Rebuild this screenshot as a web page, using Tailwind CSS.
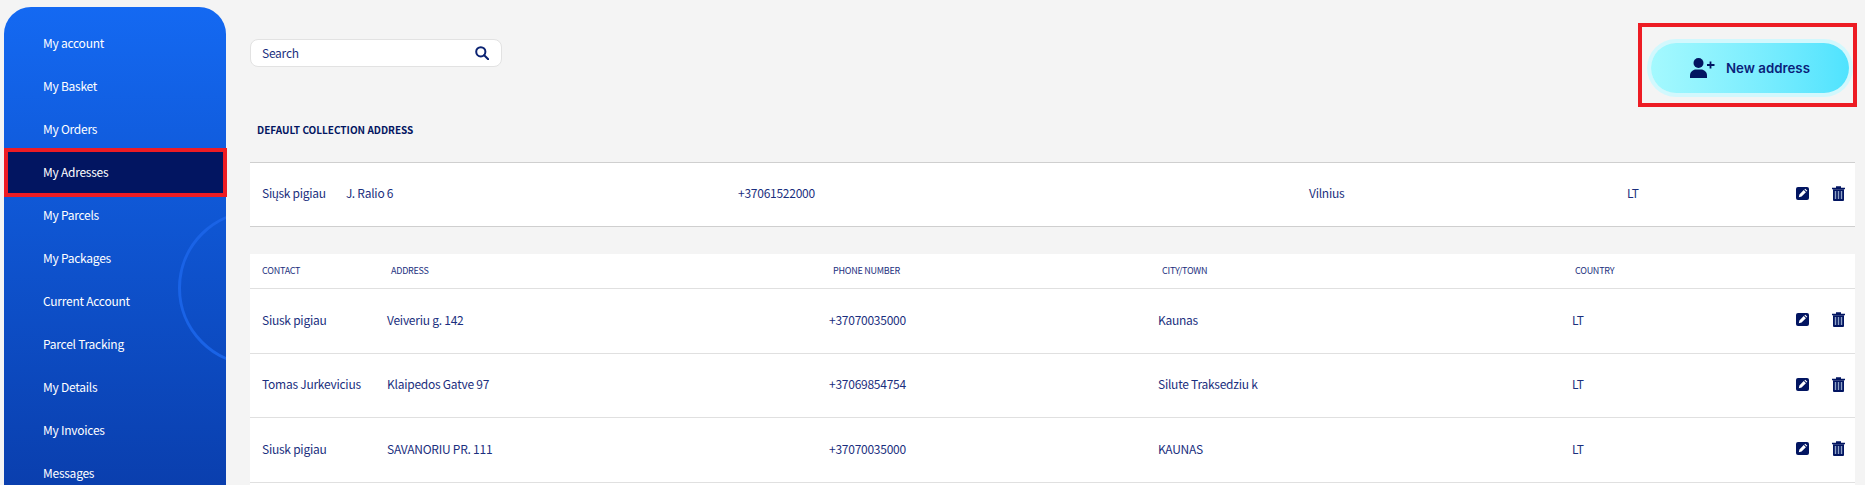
<!DOCTYPE html>
<html lang="en">
<head>
  <meta charset="UTF-8"/>
  <title>My Adresses</title>
  <script src="https://cdn.jsdelivr.net/npm/@tailwindcss/browser@4"></script>
</head>
<body class="bg-[#f4f4f4] h-[485px] overflow-hidden font-['Noto_Sans_CJK_SC',sans-serif] text-[#1b2f7e] text-[12px] tracking-[-0.25px] leading-4">
  <div class="flex h-[485px]">
    <!-- sidebar -->
    <aside class="relative ml-1 mt-[7px] w-[222px] h-[478px] shrink-0 overflow-hidden rounded-t-[27px] bg-gradient-to-b from-[#1469f2] to-[#0a3fae] pt-[14px] text-white">
      <div class="absolute left-[174px] top-[203px] w-[156px] h-[156px] rounded-full border-[3px] border-[#1a63e6]"></div>
      <nav class="relative flex flex-col">
        <a class="h-[43px] pl-[39px] flex items-center">My account</a>
        <a class="h-[43px] pl-[39px] flex items-center">My Basket</a>
        <a class="h-[43px] pl-[39px] flex items-center">My Orders</a>
        <a class="h-[43px] pl-[39px] flex items-center bg-[#021561]">My Adresses</a>
        <a class="h-[43px] pl-[39px] flex items-center">My Parcels</a>
        <a class="h-[43px] pl-[39px] flex items-center">My Packages</a>
        <a class="h-[43px] pl-[39px] flex items-center">Current Account</a>
        <a class="h-[43px] pl-[39px] flex items-center">Parcel Tracking</a>
        <a class="h-[43px] pl-[39px] flex items-center">My Details</a>
        <a class="h-[43px] pl-[39px] flex items-center">My Invoices</a>
        <a class="h-[43px] pl-[39px] flex items-center">Messages</a>
      </nav>
    </aside>
    <div class="absolute left-[4px] top-[148px] w-[223px] h-[49px] border-4 border-[#ed1c24]"></div>

    <!-- main -->
    <main class="ml-6 w-[1605px] shrink-0">
      <div class="flex justify-between items-start h-[97px]">
        <div class="mt-[39px] w-[252px] h-[28px] flex items-center justify-between pl-[11px] pr-[12px] pb-[1px] bg-white border border-[#e2e2e2] rounded-lg">
          <span>Search</span>
          <svg class="w-[14px] h-[14px]" viewBox="0 0 14 14" fill="none" stroke="#0a2272" stroke-width="2"><circle cx="5.800" cy="5.800" r="4.600"/><path d="M9.200 9.200l4 4" stroke-linecap="round"/></svg>
        </div>
        <div class="mt-[43px] mr-[6px] w-[198px] h-[50px] shrink-0 flex items-center pl-[39px] gap-[11px] rounded-full bg-gradient-to-r from-[#a4f9fe] to-[#4fe3fe] ring-4 ring-[#d2f8fd] font-['Inter',sans-serif] font-semibold text-[13.300px] tracking-normal text-[#0b1f7a]">
          <svg class="w-[25px] h-[20px]" viewBox="0 0 25 20" fill="#021561"><circle cx="8.500" cy="5" r="5"/><path d="M0 20v-2.500C0 14 3 11.500 6 11.500h5c3 0 6 2.500 6 6V20z"/><path d="M20.500 3.500v7M17 7h7.500" stroke="#021561" stroke-width="1.800" fill="none"/></svg>
          <span>New address</span>
        </div>
      </div>
      <div class="absolute left-[1638px] top-[23px] w-[219px] h-[84px] border-4 border-[#ed1c24]"></div>

      <h2 class="mt-[25px] ml-[7px] h-[16px] font-bold text-[10px] tracking-normal text-[#021561]">DEFAULT COLLECTION ADDRESS</h2>

      <!-- default address -->
      <div class="mt-[24px] h-[65px] pb-[3px] bg-white border-y border-[#cfcfcf] flex items-center">
        <span class="w-[96px] pl-3 shrink-0">Siųsk pigiau</span>
        <span class="w-[392px] shrink-0">J. Ralio 6</span>
        <span class="w-[571px] shrink-0">+37061522000</span>
        <span class="w-[318px] shrink-0">Vilnius</span>
        <span class="w-[169px] shrink-0">LT</span>
        <span class="flex items-center gap-[23px]">
          <svg class="w-[13px] h-[13px]" viewBox="0 0 13 13"><rect width="13" height="13" rx="2" fill="#021561"/><path d="M2.800 10.200l.6-2.800 4.300-4.300 2.200 2.200-4.300 4.300zM8.400 2.400l.9-.7 2 2-.7.900z" fill="#fff"/></svg>
          <svg class="w-[13px] h-[15px]" viewBox="0 0 13 15"><path d="M0 1.800h13v1.400H0zM4 .2h5v1.600H4z" fill="#021561"/><path d="M1 3.200h11V14a1 1 0 0 1-1 1H2a1 1 0 0 1-1-1z" fill="#021561"/><path d="M3.500 5v8M6.500 5v8M9.500 5v8" stroke="#8ea2c6" stroke-width="1.400"/></svg>
        </span>
      </div>

      <!-- address list -->
      <div class="mt-[27px] bg-white">
        <div class="h-[35px] border-b border-[#e0e0e0] flex items-center text-[9px]">
          <span class="w-[141px] pl-3 shrink-0">CONTACT</span>
          <span class="w-[442px] shrink-0">ADDRESS</span>
          <span class="w-[329px] shrink-0">PHONE NUMBER</span>
          <span class="w-[413px] shrink-0">CITY/TOWN</span>
          <span class="shrink-0">COUNTRY</span>
        </div>
        <div class="h-[65px] pb-[3px] border-b border-[#e0e0e0] flex items-center">
          <span class="w-[137px] pl-3 shrink-0">Siusk pigiau</span>
          <span class="w-[442px] shrink-0">Veiveriu g. 142</span>
          <span class="w-[329px] shrink-0">+37070035000</span>
          <span class="w-[414px] shrink-0">Kaunas</span>
          <span class="w-[224px] shrink-0">LT</span>
          <span class="flex items-center gap-[23px]">
            <svg class="w-[13px] h-[13px]" viewBox="0 0 13 13"><rect width="13" height="13" rx="2" fill="#021561"/><path d="M2.800 10.200l.6-2.800 4.300-4.300 2.200 2.200-4.300 4.300zM8.400 2.400l.9-.7 2 2-.7.900z" fill="#fff"/></svg>
            <svg class="w-[13px] h-[15px]" viewBox="0 0 13 15"><path d="M0 1.800h13v1.400H0zM4 .2h5v1.600H4z" fill="#021561"/><path d="M1 3.200h11V14a1 1 0 0 1-1 1H2a1 1 0 0 1-1-1z" fill="#021561"/><path d="M3.500 5v8M6.500 5v8M9.500 5v8" stroke="#8ea2c6" stroke-width="1.400"/></svg>
          </span>
        </div>
        <div class="h-[64px] pb-[3px] border-b border-[#e0e0e0] flex items-center">
          <span class="w-[137px] pl-3 shrink-0">Tomas Jurkevicius</span>
          <span class="w-[442px] shrink-0">Klaipedos Gatve 97</span>
          <span class="w-[329px] shrink-0">+37069854754</span>
          <span class="w-[414px] shrink-0">Silute Traksedziu k</span>
          <span class="w-[224px] shrink-0">LT</span>
          <span class="flex items-center gap-[23px]">
            <svg class="w-[13px] h-[13px]" viewBox="0 0 13 13"><rect width="13" height="13" rx="2" fill="#021561"/><path d="M2.800 10.200l.6-2.800 4.300-4.300 2.200 2.200-4.300 4.300zM8.400 2.400l.9-.7 2 2-.7.900z" fill="#fff"/></svg>
            <svg class="w-[13px] h-[15px]" viewBox="0 0 13 15"><path d="M0 1.800h13v1.400H0zM4 .2h5v1.600H4z" fill="#021561"/><path d="M1 3.200h11V14a1 1 0 0 1-1 1H2a1 1 0 0 1-1-1z" fill="#021561"/><path d="M3.500 5v8M6.500 5v8M9.500 5v8" stroke="#8ea2c6" stroke-width="1.400"/></svg>
          </span>
        </div>
        <div class="h-[65px] pb-[3px] border-b border-[#e0e0e0] flex items-center">
          <span class="w-[137px] pl-3 shrink-0">Siusk pigiau</span>
          <span class="w-[442px] shrink-0">SAVANORIU PR. 111</span>
          <span class="w-[329px] shrink-0">+37070035000</span>
          <span class="w-[414px] shrink-0">KAUNAS</span>
          <span class="w-[224px] shrink-0">LT</span>
          <span class="flex items-center gap-[23px]">
            <svg class="w-[13px] h-[13px]" viewBox="0 0 13 13"><rect width="13" height="13" rx="2" fill="#021561"/><path d="M2.800 10.200l.6-2.800 4.300-4.300 2.200 2.200-4.300 4.300zM8.400 2.400l.9-.7 2 2-.7.900z" fill="#fff"/></svg>
            <svg class="w-[13px] h-[15px]" viewBox="0 0 13 15"><path d="M0 1.800h13v1.400H0zM4 .2h5v1.600H4z" fill="#021561"/><path d="M1 3.200h11V14a1 1 0 0 1-1 1H2a1 1 0 0 1-1-1z" fill="#021561"/><path d="M3.500 5v8M6.500 5v8M9.500 5v8" stroke="#8ea2c6" stroke-width="1.400"/></svg>
          </span>
        </div>
        <div class="h-[20px]"></div>
      </div>
    </main>
  </div>
</body>
</html>
